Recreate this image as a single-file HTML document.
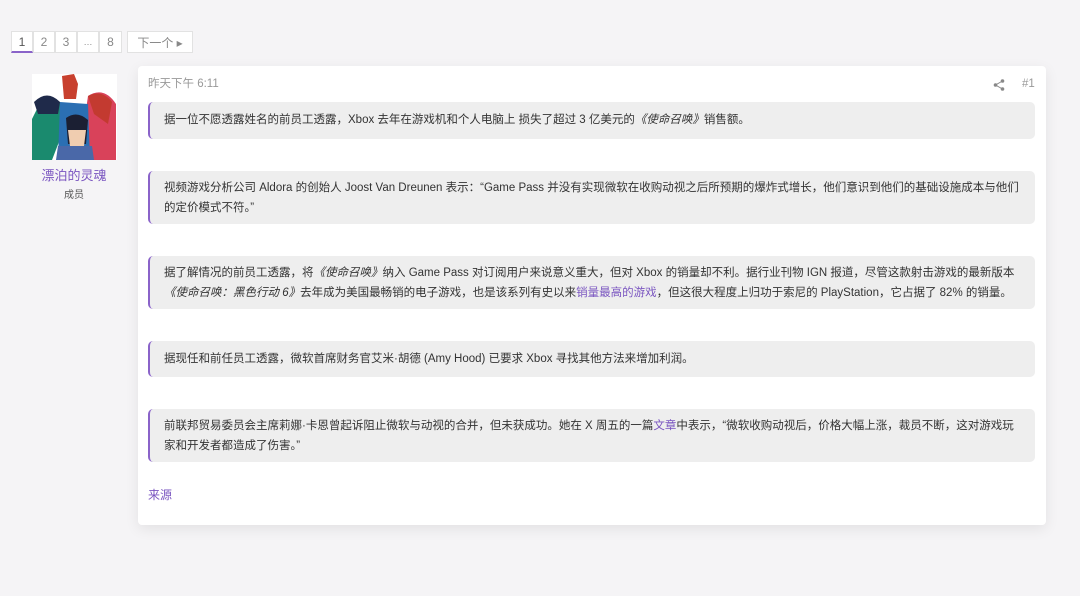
<!DOCTYPE html>
<html><head><meta charset="utf-8"><style>
body{margin:0;width:1080px;height:596px;background:#f5f4f6;font-family:"Liberation Sans","Noto Sans CJK SC",sans-serif;position:relative;overflow:hidden;color:#333}
.pg{position:absolute;top:31px;height:22px;border:1px solid #e2e2e2;background:#fff;font-size:12px;color:#888;display:flex;align-items:center;justify-content:center;box-sizing:border-box}
.card{position:absolute;left:138px;top:66px;width:908px;height:459px;background:#fff;border-radius:4px;box-shadow:0 4px 14px rgba(0,0,0,.08)}
.q{position:absolute;left:10px;width:887px;background:#eeeeee;border-left:2px solid #8a63c9;border-radius:5px;box-sizing:border-box;padding:0 15px 0 14px;font-size:11.5px;line-height:20px;color:#333}
.one{height:37px;padding-top:8px}
.two{height:53px;padding-top:7px}
a{color:#7a55c0;text-decoration:none}
</style></head><body>
<div class="pg" style="left:11px;width:22px;color:#555;border-bottom:2px solid #8a63c9">1</div>
<div class="pg" style="left:33px;width:22px">2</div>
<div class="pg" style="left:55px;width:22px">3</div>
<div class="pg" style="left:77px;width:22px;font-size:9px">…</div>
<div class="pg" style="left:99px;width:23px">8</div>
<div class="pg" style="left:127px;width:66px">下一个 ▸</div>

<svg style="position:absolute;left:32px;top:74px" width="85" height="86" viewBox="0 0 85 86">
<rect width="85" height="86" fill="#fff"/>
<path d="M30 2 L42 0 L46 10 L44 25 L32 25 Z" fill="#c8402e"/>
<path d="M0 45 L10 25 L28 28 L30 60 L20 86 L0 86Z" fill="#1a8a6e"/>
<path d="M2 28 Q15 15 28 28 L26 40 L6 40Z" fill="#1f2a4a"/>
<path d="M56 22 Q72 12 84 30 L84 86 L56 86 L52 50Z" fill="#d9425a"/>
<path d="M56 22 Q70 15 80 28 L76 50 L62 40Z" fill="#c33a30"/>
<path d="M28 28 L56 30 L58 86 L26 86Z" fill="#2b6fb3"/>
<path d="M34 44 Q45 36 56 46 L54 70 L36 70Z" fill="#1b1f33"/>
<path d="M36 56 L54 56 L52 72 L38 72Z" fill="#f0cdb0"/>
<path d="M26 72 L60 72 L62 86 L24 86Z" fill="#4a68a8"/>
</svg>
<div style="position:absolute;left:0;width:148px;top:165px;text-align:center;font-size:13px;color:#7a55c0">漂泊的灵魂</div>
<div style="position:absolute;left:0;width:148px;top:186px;text-align:center;font-size:10px;color:#555">成员</div>

<div class="card">
<div style="position:absolute;left:10px;top:9px;font-size:11.5px;color:#999">昨天下午 6:11</div>
<svg style="position:absolute;left:855px;top:13px" width="12" height="12" viewBox="0 0 12 12" fill="#888"><circle cx="9.5" cy="2" r="1.8"/><circle cx="2.5" cy="6" r="1.8"/><circle cx="9.5" cy="10" r="1.8"/><path d="M9.5 2 L2.5 6 L9.5 10" stroke="#888" stroke-width="1" fill="none"/></svg>
<div style="position:absolute;left:884px;top:12px;font-size:11.5px;color:#999">#1</div>

<div class="q one" style="top:36px">据一位不愿透露姓名的前员工透露，Xbox 去年在游戏机和个人电脑上 损失了超过 3 亿美元的<i>《使命召唤》</i>销售额。</div>
<div class="q two" style="top:105px">视频游戏分析公司 Aldora 的创始人 Joost Van Dreunen 表示：“Game Pass 并没有实现微软在收购动视之后所预期的爆炸式增长，他们意识到他们的基础设施成本与他们<br>的定价模式不符。”</div>
<div class="q two" style="top:190px">据了解情况的前员工透露，将<i>《使命召唤》</i>纳入 Game Pass 对订阅用户来说意义重大，但对 Xbox 的销量却不利。据行业刊物 IGN 报道，尽管这款射击游戏的最新版本<br><i>《使命召唤：黑色行动 6》</i>去年成为美国最畅销的电子游戏，也是该系列有史以来<a>销量最高的游戏</a>，但这很大程度上归功于索尼的 PlayStation，它占据了 82% 的销量。</div>
<div class="q one" style="top:275px;height:36px">据现任和前任员工透露，微软首席财务官艾米·胡德 (Amy Hood) 已要求 Xbox 寻找其他方法来增加利润。</div>
<div class="q two" style="top:343px">前联邦贸易委员会主席莉娜·卡恩曾起诉阻止微软与动视的合并，但未获成功。她在 X 周五的一篇<a>文章</a>中表示，“微软收购动视后，价格大幅上涨，裁员不断，这对游戏玩<br>家和开发者都造成了伤害。”</div>
<div style="position:absolute;left:10px;top:420px;font-size:12px"><a>来源</a></div>
</div>
</body></html>
